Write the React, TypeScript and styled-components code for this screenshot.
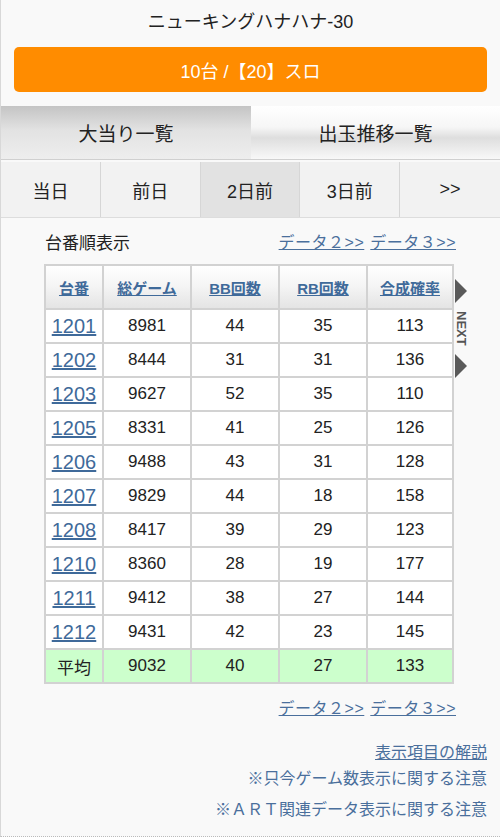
import React from 'react';
import styled, { createGlobalStyle } from 'styled-components';

const GlobalStyle = createGlobalStyle`
  html, body {
    margin: 0;
    padding: 0;
    background: #f9f9f9;
  }
  body {
    font-family: 'Liberation Sans', 'Noto Sans CJK JP', sans-serif;
    color: #222;
  }
`;

const Page = styled.div`
  width: 500px;
  min-height: 837px;
  box-sizing: border-box;
  border-left: 1px solid #d8d8d8;
  border-bottom: 1px dotted #bbb;
  background: #f9f9f9;
`;

const Title = styled.div`
  height: 40px;
  padding-bottom: 4px;
  display: flex;
  align-items: center;
  justify-content: center;
  font-size: 18px;
  color: #222;
`;

const MachineButton = styled.div`
  margin: 3px 13px 0;
  height: 45px;
  border-radius: 5px;
  background: #ff8c00;
  color: #fff;
  font-size: 18px;
  display: flex;
  align-items: center;
  justify-content: center;
`;

const TabBar = styled.div`
  margin-top: 14px;
  display: grid;
  grid-template-columns: 250px 1fr;
  height: 54px;
`;

const Tab = styled.div<{ active?: boolean }>`
  display: flex;
  align-items: center;
  justify-content: center;
  font-size: 19px;
  color: #222;
  background: ${({ active }) =>
    active
      ? 'linear-gradient(to bottom, #c4c4c4 0%, #e2e2e2 45%, #eeeeee 100%)'
      : 'linear-gradient(to bottom, #ffffff 0%, #f6f6f6 40%, #dedede 60%, #f8f8f8 100%)'};
  border-bottom: 1px solid #d0d0d0;
`;

const DayBar = styled.div`
  margin-top: 2px;
  display: grid;
  grid-template-columns: repeat(5, 1fr);
  height: 55px;
  border-bottom: 1px solid #ddd;
`;

const DayTab = styled.div<{ active?: boolean }>`
  display: flex;
  align-items: center;
  justify-content: center;
  font-size: 18px;
  color: #222;
  background: ${({ active }) => (active ? '#e2e2e2' : '#f2f2f2')};
  border-right: 1px solid #d6d6d6;
  &:last-child {
    border-right: none;
  }
`;

const Section = styled.div`
  padding: 0 0 0 43px;
`;

const InfoRow = styled.div`
  height: 46px;
  width: 412px;
  display: flex;
  align-items: center;
  justify-content: space-between;
`;

const Caption = styled.span`
  font-size: 17px;
  color: #222;
  margin-left: 1px;
`;

const LinkGroup = styled.div`
  display: flex;
  gap: 6px;
`;

const Link = styled.a`
  font-size: 16px;
  color: #4a6f9c;
  text-decoration: underline;
  letter-spacing: 0.5px;
`;

const TableWrap = styled.div`
  position: relative;
  width: 410px;
`;

const Table = styled.table`
  width: 408px;
  border-collapse: collapse;
  table-layout: fixed;
  background: #fff;
`;

const Th = styled.th`
  height: 42px;
  border: 2px solid #d2d2d2;
  background: linear-gradient(to bottom, #ffffff 0%, #f4f4f4 50%, #e4e4e4 100%);
  font-size: 15px;
  font-weight: bold;
  padding: 0;
`;

const HeadLink = styled.a`
  color: #3f6a9a;
  text-decoration: underline;
`;

const Td = styled.td<{ avg?: boolean }>`
  height: 32px;
  border: 2px solid #d2d2d2;
  text-align: center;
  font-size: 17px;
  color: #222;
  padding: 0;
  background: ${({ avg }) => (avg ? '#ccffcc' : '#ffffff')};
`;

const NumLink = styled.a`
  font-size: 20px;
  color: #3f6a9a;
  text-decoration: underline;
`;

const Next = styled.div`
  position: absolute;
  left: 410px;
  top: 15px;
  width: 14px;
  display: flex;
  flex-direction: column;
  align-items: center;
  color: #555;
`;

const NextLabel = styled.span`
  writing-mode: vertical-rl;
  font-size: 13px;
  font-weight: bold;
  margin: 8px 0 8px 1px;
`;

const BottomLinks = styled.div`
  height: 46px;
  display: flex;
  align-items: center;
  justify-content: flex-end;
  width: 412px;
`;

const Notes = styled.div`
  display: flex;
  flex-direction: column;
  align-items: flex-end;
  padding: 10px 13px 0 0;
`;

const Note = styled.a<{ underline?: boolean; gap: number }>`
  font-size: 16px;
  color: #4a6f9c;
  line-height: 25px;
  margin-top: ${({ gap }) => gap}px;
  text-decoration: ${({ underline }) => (underline ? 'underline' : 'none')};
`;

const Triangle = () => (
  <svg width="12" height="24" viewBox="0 0 12 24">
    <polygon points="0,0 12,12 0,24" fill="#5a5a5a" />
  </svg>
);

const rows = [
  ['1201', '8981', '44', '35', '113'],
  ['1202', '8444', '31', '31', '136'],
  ['1203', '9627', '52', '35', '110'],
  ['1205', '8331', '41', '25', '126'],
  ['1206', '9488', '43', '31', '128'],
  ['1207', '9829', '44', '18', '158'],
  ['1208', '8417', '39', '29', '123'],
  ['1210', '8360', '28', '19', '177'],
  ['1211', '9412', '38', '27', '144'],
  ['1212', '9431', '42', '23', '145'],
];

const App: React.FC = () => {
  return (
    <Page>
      <GlobalStyle />
      <Title>ニューキングハナハナ-30</Title>
      <MachineButton>10台 /【20】スロ</MachineButton>
      <TabBar>
        <Tab active>大当り一覧</Tab>
        <Tab>出玉推移一覧</Tab>
      </TabBar>
      <DayBar>
        <DayTab>当日</DayTab>
        <DayTab>前日</DayTab>
        <DayTab active>2日前</DayTab>
        <DayTab>3日前</DayTab>
        <DayTab>&gt;&gt;</DayTab>
      </DayBar>
      <Section>
        <InfoRow>
          <Caption>台番順表示</Caption>
          <LinkGroup>
            <Link>データ２&gt;&gt;</Link>
            <Link>データ３&gt;&gt;</Link>
          </LinkGroup>
        </InfoRow>
        <TableWrap>
          <Table>
            <colgroup>
              <col style={{ width: 58 }} />
              <col style={{ width: 88 }} />
              <col style={{ width: 88 }} />
              <col style={{ width: 88 }} />
              <col style={{ width: 86 }} />
            </colgroup>
            <thead>
              <tr>
                <Th><HeadLink>台番</HeadLink></Th>
                <Th><HeadLink>総ゲーム</HeadLink></Th>
                <Th><HeadLink>BB回数</HeadLink></Th>
                <Th><HeadLink>RB回数</HeadLink></Th>
                <Th><HeadLink>合成確率</HeadLink></Th>
              </tr>
            </thead>
            <tbody>
              {rows.map((r) => (
                <tr key={r[0]}>
                  <Td><NumLink>{r[0]}</NumLink></Td>
                  <Td>{r[1]}</Td>
                  <Td>{r[2]}</Td>
                  <Td>{r[3]}</Td>
                  <Td>{r[4]}</Td>
                </tr>
              ))}
              <tr>
                <Td avg>平均</Td>
                <Td avg>9032</Td>
                <Td avg>40</Td>
                <Td avg>27</Td>
                <Td avg>133</Td>
              </tr>
            </tbody>
          </Table>
          <Next>
            <Triangle />
            <NextLabel>NEXT</NextLabel>
            <Triangle />
          </Next>
        </TableWrap>
        <BottomLinks>
          <LinkGroup>
            <Link>データ２&gt;&gt;</Link>
            <Link>データ３&gt;&gt;</Link>
          </LinkGroup>
        </BottomLinks>
      </Section>
      <Notes>
        <Note underline gap={0}>表示項目の解説</Note>
        <Note gap={1}>※只今ゲーム数表示に関する注意</Note>
        <Note gap={6}>※ＡＲＴ関連データ表示に関する注意</Note>
      </Notes>
    </Page>
  );
};

export default App;
